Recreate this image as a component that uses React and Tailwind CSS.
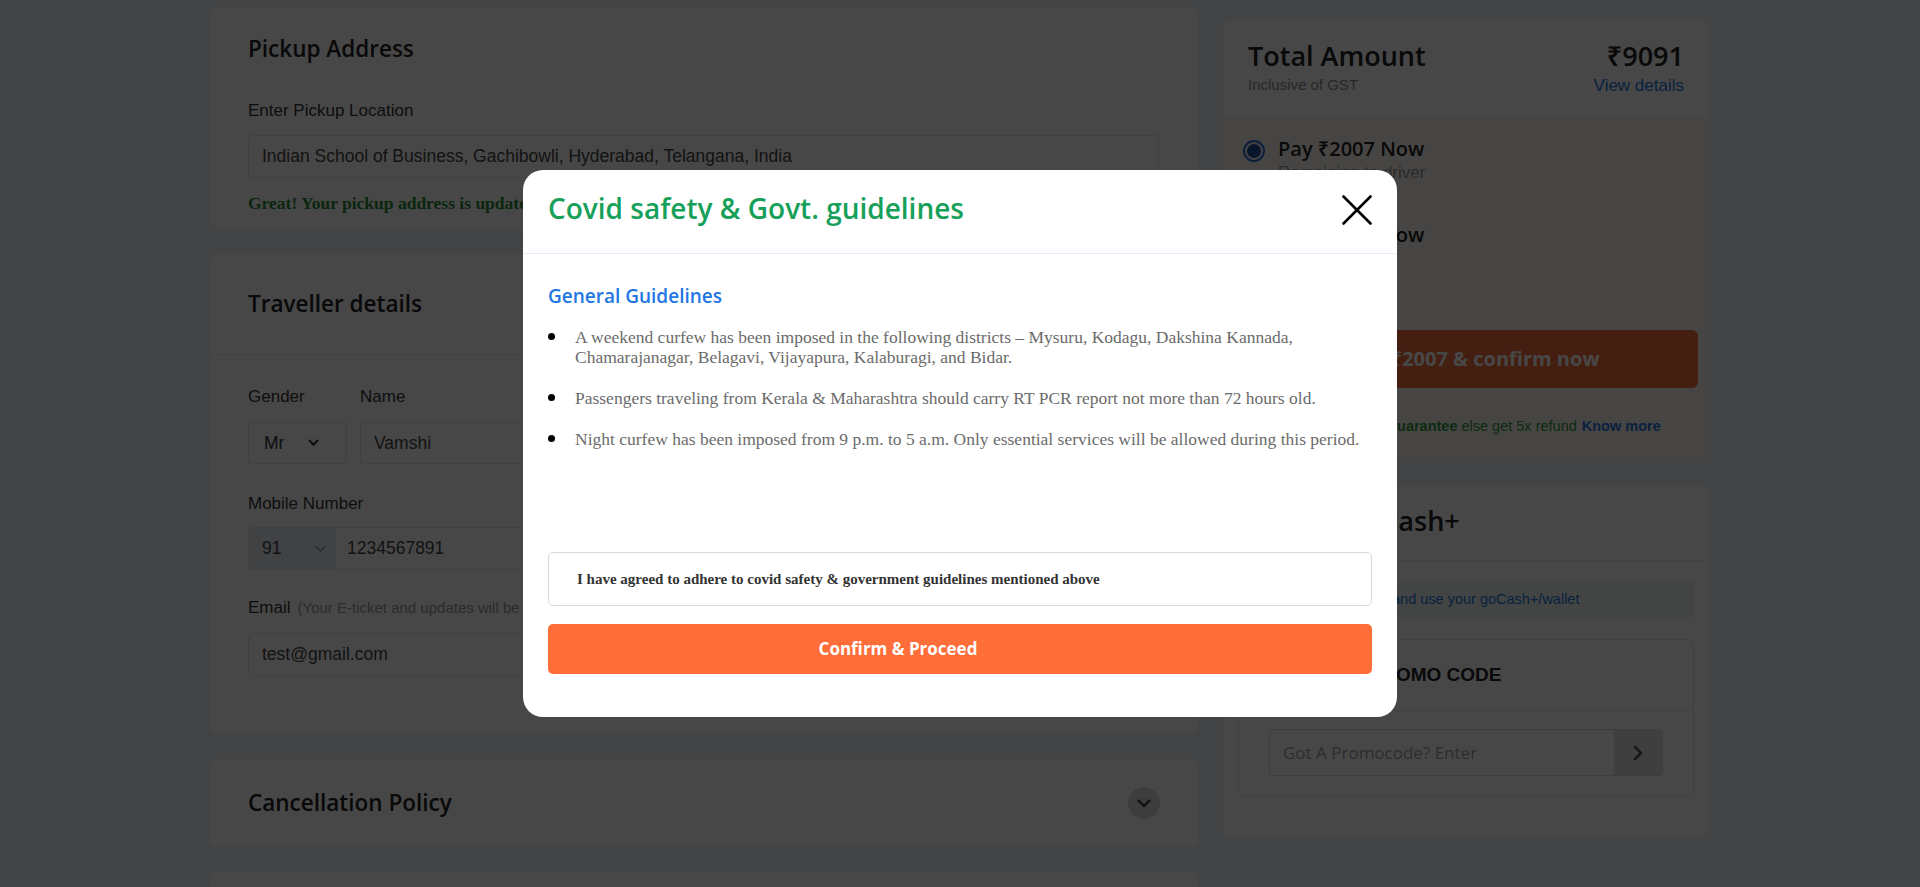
import React from "react";

// font stacks (Quicksand / Arial / Times stand-ins)
const heading = "font-['Open_Sans','Noto_Sans',sans-serif]";
const sans = "font-['Liberation_Sans',Arial,sans-serif]";
const serif = "font-['Liberation_Serif','Times_New_Roman',serif]";

const guidelines = [
  "A weekend curfew has been imposed in the following districts – Mysuru, Kodagu, Dakshina Kannada, Chamarajanagar, Belagavi, Vijayapura, Kalaburagi, and Bidar.",
  "Passengers traveling from Kerala & Maharashtra should carry RT PCR report not more than 72 hours old.",
  "Night curfew has been imposed from 9 p.m. to 5 a.m. Only essential services will be allowed during this period.",
];

function Field({ children, className = "" }) {
  return (
    <div
      className={
        "flex h-[43px] items-center rounded-[4px] border border-[#e4e4e4] bg-white text-[17.5px] text-[#444] " +
        className
      }
    >
      {children}
    </div>
  );
}

function PickupCard() {
  return (
    <section className="rounded-[8px] bg-white px-[38px] pt-[27px] pb-[15px]">
      <h2 className={heading + " text-[22.5px] font-semibold leading-[30px] text-[#222]"}>Pickup Address</h2>
      <div className="mt-[37px] text-[17px] leading-[20px] text-[#333]">Enter Pickup Location</div>
      <Field className="mt-[14px] w-[911px] px-[13px]">
        Indian School of Business, Gachibowli, Hyderabad, Telangana, India
      </Field>
      <p className={serif + " mt-[15px] whitespace-nowrap text-[17.5px] font-bold leading-[20px] text-[#27882f]"}>
        Great! Your pickup address is updated
      </p>
    </section>
  );
}

function TravellerCard() {
  return (
    <section className="rounded-[8px] bg-white">
      <div className="border-b border-[#ececec] px-[38px] pt-[35px] pb-[35px]">
        <h2 className={heading + " text-[22.5px] font-semibold leading-[30px] text-[#222]"}>Traveller details</h2>
      </div>
      <div className="px-[38px] pt-[32px] pb-[57px] text-[#333]">
        <div className="flex gap-[13px]">
          <div className="w-[99px]">
            <div className="text-[17px] leading-[20px]">Gender</div>
            <div className="mt-[15px] flex h-[42px] items-center rounded-[4px] border border-[#e4e4e4] pl-[15px] text-[17.5px]">
              Mr
              <svg viewBox="0 0 11 8" className="ml-[24px] h-[8px] w-[11px]" fill="none" stroke="#333" strokeWidth="2" strokeLinecap="round" strokeLinejoin="round">
                <path d="M1.5 1.5 L5.5 5.8 L9.5 1.5" />
              </svg>
            </div>
          </div>
          <div className="flex-1">
            <div className="text-[17px] leading-[20px]">Name</div>
            <div className="mt-[15px] flex h-[42px] w-[799px] items-center rounded-[4px] border border-[#e4e4e4] pl-[13px] text-[17.5px] text-[#444]">
              Vamshi
            </div>
          </div>
        </div>

        <div className="mt-[30px] text-[17px] leading-[20px]">Mobile Number</div>
        <Field className="mt-[13px] w-[911px] overflow-hidden">
          <div className="flex h-full w-[87px] items-center bg-[#e8ecf3] pl-[13px] pr-[10px]">
            91
            <svg viewBox="0 0 11 8" className="ml-auto h-[8px] w-[11px]" fill="none" stroke="#8a8f99" strokeWidth="1.3" strokeLinecap="round">
              <path d="M1 1.5 L5.5 6 L10 1.5" />
            </svg>
          </div>
          <span className="pl-[11px]">1234567891</span>
        </Field>

        <div className="mt-[28px] flex items-baseline text-[17px] leading-[20px]">
          Email
          <span className="ml-[7px] text-[15px] text-[#9a9a9a]">(Your E-ticket and updates will be sent on this email)</span>
        </div>
        <Field className="mt-[15px] w-[911px] px-[13px]">test@gmail.com</Field>
      </div>
    </section>
  );
}

function CancellationCard() {
  return (
    <section className="flex h-[87px] items-center justify-between rounded-[8px] bg-white px-[38px]">
      <h2 className={heading + " text-[22.5px] font-semibold leading-[30px] text-[#222]"}>Cancellation Policy</h2>
      <span className="flex h-[32px] w-[32px] items-center justify-center rounded-full bg-[#d9d9d9]">
        <svg viewBox="0 0 14 9" className="mt-[2px] h-[9px] w-[14px]" fill="none" stroke="#333" strokeWidth="2.2" strokeLinecap="round" strokeLinejoin="round">
          <path d="M1.5 1.5 L7 7 L12.5 1.5" />
        </svg>
      </span>
    </section>
  );
}

function PaymentCard() {
  return (
    <section className="overflow-hidden rounded-[10px] bg-white">
      <div className="flex h-[97px] justify-between border-b border-[#ececec] px-[25px] pt-[20px]">
        <div>
          <div className={heading + " text-[27px] font-semibold leading-[32px] text-[#222]"}>Total Amount</div>
          <div className="mt-[5px] text-[15px] leading-[16px] text-[#8c8c8c]">Inclusive of GST</div>
        </div>
        <div className="flex flex-col items-end">
          <div className={heading + " text-[27px] font-semibold leading-[32px] text-[#222]"}>₹9091</div>
          <a className="mt-[4px] text-[17px] leading-[20px] text-[#2276e3]">View details</a>
        </div>
      </div>

      <div className="bg-[#fff8f0] pt-[20px] pl-[20px] pr-[11px] pb-[24px]">
        <label className="flex items-start gap-[13px]">
          <span className="mt-[3px] flex h-[22px] w-[22px] items-center justify-center rounded-full border-2 border-[#2a6fd6]">
            <span className="h-[14px] w-[14px] rounded-full bg-[#1d4f9e]" />
          </span>
          <span>
            <span className={heading + " block text-[20px] font-semibold leading-[24px] text-[#222]"}>Pay ₹2007 Now</span>
            <span className="mt-[2px] block text-[17px] leading-[20px] text-[#9a9a9a]">Remaining to driver</span>
          </span>
        </label>
        <label className="mt-[40px] flex items-start gap-[13px]">
          <span className="mt-[1px] h-[22px] w-[22px] rounded-full border-2 border-[#bdbdbd] bg-white" />
          <span className={heading + " block text-[20px] font-semibold leading-[24px] text-[#222]"}>Pay ₹9091 Now</span>
        </label>

        <button className={heading + " ml-[8px] mt-[83px] flex h-[58px] w-[447px] items-center justify-center rounded-[6px] bg-[#f26c3b] text-[20px] font-bold text-white"}>
          Pay ₹2007 &amp; confirm now
        </button>
        <div className="ml-[8px] mt-[28px] flex w-[447px] justify-center whitespace-nowrap pl-[4px] text-[14.5px] leading-[20px] text-[#2e9b3a]">
          <b>Lowest Price Guarantee</b>
          <span className="ml-[4px]">else get 5x refund</span>
          <b className="ml-[5px] text-[#2276e3]">Know more</b>
        </div>
      </div>
    </section>
  );
}

function OffersCard() {
  return (
    <section className="rounded-[10px] bg-white pb-[41px]">
      <div className="flex h-[75px] items-start gap-[20px] border-b border-[#ececec] px-[25px] pt-[19px]">
        <span className="mt-[4px] h-[26px] w-[26px] rounded-full bg-[#f6b73c]" />
        <div className={heading + " text-[27px] font-semibold leading-[32px] text-[#222]"}>Use goCash+</div>
      </div>
      <div className="mx-[15px] mt-[20px] flex h-[37px] items-center justify-center rounded-[4px] bg-[#edf8ef] text-[14.5px] text-[#2276e3]">
        Login and use your goCash+/wallet
      </div>
      <div className="mx-[15px] mt-[21px] rounded-[8px] border border-[#e6e6e6]">
        <div className="flex h-[71px] items-center gap-[10px] border-b border-[#ececec] px-[30px]">
          <span className="h-[24px] w-[24px] rounded-[4px] bg-[#f26c3b]" />
          <span className="text-[19px] font-bold text-[#222]">APPLY PROMO CODE</span>
        </div>
        <div className="px-[30px] pt-[18px] pb-[20px]">
          <div className="flex h-[47px] overflow-hidden rounded-[4px] border border-[#dedede]">
            <div className={heading + " flex flex-1 items-center pl-[13px] text-[17px] text-[#a3a3a3]"}>Got A Promocode? Enter</div>
            <div className="flex w-[48px] items-center justify-center bg-[#e2e2e2]">
              <svg viewBox="0 0 10 16" className="h-[16px] w-[10px]" fill="none" stroke="#555" strokeWidth="2.6" strokeLinecap="round" strokeLinejoin="round">
                <path d="M2 1.8 L8 8 L2 14.2" />
              </svg>
            </div>
          </div>
        </div>
      </div>
    </section>
  );
}

function CovidModal() {
  return (
    <div className="w-[874px] rounded-[20px] bg-white">
      <div className="flex h-[84px] items-start justify-between border-b border-[#e5edfb] px-[25px] pt-[20px]">
        <h3 className={heading + " text-[28px] font-semibold leading-[36px] text-[#16a05a]"}>
          Covid safety &amp; Govt. guidelines
        </h3>
        <button aria-label="Close" className="mt-[5px] h-[30px] w-[30px]">
          <svg viewBox="0 0 30 30" className="h-[30px] w-[30px]" fill="none" stroke="#000" strokeWidth="2.6" strokeLinecap="round">
            <path d="M1.5 1.5 L28.5 28.5 M28.5 1.5 L1.5 28.5" />
          </svg>
        </button>
      </div>

      <div className="px-[25px] pt-[29px] pb-[43px]">
        <h4 className={heading + " text-[19px] font-semibold leading-[26px] text-[#2276e3]"}>General Guidelines</h4>
        <ul className={serif + " mt-[18px] space-y-[21px] text-[17.5px] leading-[20px] text-[#6b6b6b]"}>
          {guidelines.map((g, i) => (
            <li key={i} className="flex gap-[20px]">
              <span className="mt-[6px] h-[7px] w-[7px] shrink-0 rounded-full bg-black" />
              <span>{g}</span>
            </li>
          ))}
        </ul>

        <div className="mt-[103px] flex h-[54px] items-center rounded-[5px] border border-[#d9d9d9] pl-[28px]">
          <span className={serif + " text-[15px] font-bold text-[#333]"}>
            I have agreed to adhere to covid safety &amp; government guidelines mentioned above
          </span>
        </div>

        <button className={heading + " mt-[18px] flex h-[50px] w-full items-center justify-center rounded-[5px] bg-[#ff6d38] pr-[124px] text-[17px] font-bold text-white"}>
          Confirm &amp; Proceed
        </button>
      </div>
    </div>
  );
}

export default function App() {
  return (
    <div className={"relative h-[887px] w-full overflow-hidden bg-[#eef2fb] " + sans}>
      <div className="flex items-start gap-[25px] pl-[210px] pt-[7px]">
        <div className="flex w-[988px] flex-col gap-[26px]">
          <PickupCard />
          <TravellerCard />
          <CancellationCard />
          <section className="h-[120px] rounded-[8px] bg-white" />
        </div>
        <div className="mt-[13px] flex w-[486px] flex-col gap-[26px]">
          <PaymentCard />
          <OffersCard />
        </div>
      </div>

      {/* backdrop + modal */}
      <div className="fixed inset-0 z-10 flex items-center justify-center bg-black/[0.72]">
        <CovidModal />
      </div>
    </div>
  );
}
